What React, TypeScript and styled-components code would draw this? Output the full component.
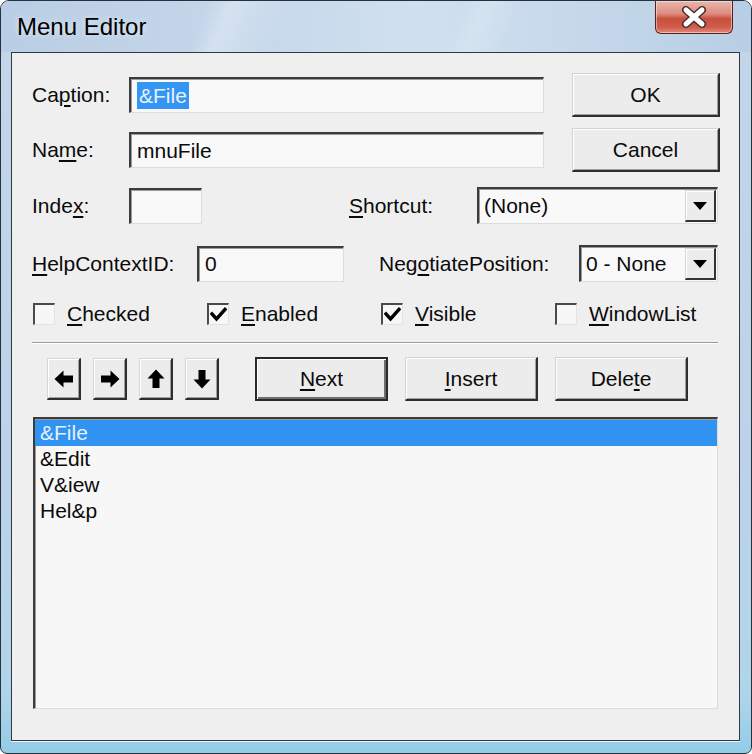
import React from "react";
import styled, { createGlobalStyle } from "styled-components";

const Global = createGlobalStyle`
  html, body { margin: 0; padding: 0; background: #ffffff; }
  body {
    width: 752px; height: 754px; overflow: hidden;
    font-family: "Liberation Sans", Arial, sans-serif;
    color: #0a0a0a;
  }
  * { box-sizing: border-box; }
`;

const Window = styled.div`
  width: 752px;
  height: 754px;
  border: 1px solid #27313c;
  border-radius: 9px 9px 7px 7px;
  background: linear-gradient(180deg, #c3d6ea 0%, #bdd2e8 60%, #b0d5ea 92%, #92cce6 100%);
  display: flex;
  flex-direction: column;
  overflow: hidden;
`;

const TitleBar = styled.div`
  height: 51px;
  flex: none;
  display: flex;
  align-items: flex-start;
  justify-content: space-between;
  padding: 0 18px 0 16px;
  background:
    linear-gradient(112deg, transparent 0 27%, rgba(255,255,255,0.28) 30%, rgba(255,255,255,0.12) 34%, transparent 38%),
    linear-gradient(112deg, transparent 0 60%, rgba(255,255,255,0.18) 63%, transparent 68%),
    linear-gradient(90deg, #b9cde4 0%, #c6d8eb 35%, #d0e0ef 55%, #c4d7ea 80%, #b8cee5 100%);
`;

const Title = styled.div`
  margin-top: 12px;
  font-size: 24px;
  line-height: 28px;
  color: #000;
  text-shadow: 0 0 6px rgba(255,255,255,0.7);
`;

const CloseButton = styled.div`
  width: 78px;
  height: 33px;
  border: 1px solid #5a2018;
  border-top: none;
  border-radius: 0 0 6px 6px;
  background: linear-gradient(180deg, #eab7ad 0%, #dd8c7e 40%, #c9503f 55%, #d0594a 80%, #e08a78 100%);
  box-shadow: inset 0 0 0 1px rgba(255,255,255,0.45);
  display: flex;
  align-items: center;
  justify-content: center;
`;

const Client = styled.div`
  flex: 1;
  margin: 0 11px 12px 10px;
  border: 1px solid #2e3944;
  box-shadow: 0 1px 0 #eef5fa;
  background: #efefef;
  display: flex;
  flex-direction: column;
  padding: 20px 19px 31px 20px;
`;

const Row = styled.div<{ $h: number; $mt: number }>`
  display: flex;
  align-items: center;
  flex: none;
  height: ${(p) => p.$h}px;
  margin-top: ${(p) => p.$mt}px;
`;

const Label = styled.span<{ $w: number; $ml?: number }>`
  width: ${(p) => p.$w}px;
  margin-left: ${(p) => p.$ml ?? 0}px;
  flex: none;
  font-size: 21px;
  white-space: nowrap;
`;

const Key = styled.span`
  text-decoration: underline;
  text-underline-offset: 3px;
  text-decoration-thickness: 2px;
`;

const TextBox = styled.div<{ $w: number }>`
  width: ${(p) => p.$w}px;
  height: 36px;
  flex: none;
  border-style: solid;
  border-width: 2px 1px 1px 2px;
  border-color: #3c3c3c #dcdcdc #dcdcdc #3c3c3c;
  box-shadow: inset 1px 1px 0 #9a9a9a;
  background: #f9f9f9;
  display: flex;
  align-items: center;
  padding-left: 6px;
  font-size: 21px;
`;

const Selected = styled.span`
  background: #3495f2;
  color: #e8f3ff;
  padding: 2px 2px;
  line-height: 23px;
`;

const Button = styled.div<{ $w: number; $default?: boolean }>`
  width: ${(p) => p.$w}px;
  height: 44px;
  flex: none;
  font-size: 21px;
  display: flex;
  align-items: center;
  justify-content: center;
  background: #ececec;
  border-style: solid;
  border-width: ${(p) => (p.$default ? "2px" : "1px 2px 2px 1px")};
  border-color: ${(p) =>
    p.$default ? "#2a2a2a" : "#d2d2d2 #2e2e2e #2e2e2e #d2d2d2"};
  box-shadow: ${(p) =>
    p.$default
      ? "inset 1px 1px 0 #ffffff, inset -2px -2px 0 #6e6e6e"
      : "inset 1px 1px 0 #ffffff, inset -1px -1px 0 #a0a0a0"};
`;

const ArrowButton = styled.div`
  width: 34px;
  height: 42px;
  flex: none;
  display: flex;
  align-items: center;
  justify-content: center;
  background: #ececec;
  border-style: solid;
  border-width: 1px 2px 2px 1px;
  border-color: #d6d6d6 #2e2e2e #2e2e2e #d6d6d6;
  box-shadow: inset 1px 1px 0 #ffffff, inset -1px -1px 0 #a0a0a0;
`;

const Spacer = styled.div<{ $w: number }>`
  width: ${(p) => p.$w}px;
  flex: none;
`;

const Combo = styled.div<{ $w: number }>`
  width: ${(p) => p.$w}px;
  height: 37px;
  flex: none;
  border-style: solid;
  border-width: 2px 1px 1px 2px;
  border-color: #3c3c3c #dcdcdc #dcdcdc #3c3c3c;
  box-shadow: inset 1px 1px 0 #9a9a9a;
  background: #f9f9f9;
  display: flex;
  align-items: stretch;
  font-size: 21px;
`;

const ComboText = styled.div`
  flex: 1;
  display: flex;
  align-items: center;
  padding-left: 5px;
  white-space: nowrap;
  overflow: hidden;
`;

const DropButton = styled.div`
  width: 31px;
  flex: none;
  margin: 1px 1px 1px 0;
  display: flex;
  align-items: center;
  justify-content: center;
  background: #ececec;
  border-style: solid;
  border-width: 1px 2px 2px 1px;
  border-color: #d8d8d8 #333333 #333333 #d8d8d8;
  box-shadow: inset 1px 1px 0 #ffffff;
`;

const CheckCell = styled.div<{ $first?: boolean }>`
  width: 174px;
  flex: none;
  display: flex;
  align-items: center;
  gap: 12px;
  margin-left: ${(p) => (p.$first ? "1px" : "0")};
  font-size: 21px;
`;

const CheckBox = styled.div`
  width: 22px;
  height: 22px;
  flex: none;
  border-style: solid;
  border-width: 2px 1px 1px 2px;
  border-color: #4a4a4a #e2e2e2 #e2e2e2 #4a4a4a;
  background: #f7f7f7;
  display: flex;
  align-items: center;
  justify-content: center;
`;

const Separator = styled.div`
  flex: none;
  margin-top: 15px;
  margin-right: 2px;
  height: 2px;
  border-top: 1px solid #9c9c9c;
  border-bottom: 1px solid #ffffff;
`;

const ArrowGroup = styled.div`
  display: flex;
  gap: 12px;
  margin-left: 15px;
`;

const ActionGroup = styled.div`
  display: flex;
  gap: 17px;
  margin-left: 36px;
`;

const List = styled.div`
  flex: 1;
  margin: 16px 2px 0 1px;
  border-style: solid;
  border-width: 2px 1px 1px 2px;
  border-color: #3c3c3c #dcdcdc #dcdcdc #3c3c3c;
  box-shadow: inset 1px 1px 0 #9a9a9a;
  background: #f7f7f7;
  padding-top: 1px;
  display: flex;
  flex-direction: column;
`;

const ListItem = styled.div<{ $selected?: boolean }>`
  height: 26px;
  line-height: 26px;
  padding-left: 5px;
  font-size: 21px;
  background: ${(p) => (p.$selected ? "#3193f1" : "transparent")};
  color: ${(p) => (p.$selected ? "#e3f1ff" : "#0a0a0a")};
`;

const CloseGlyph = () => (
  <svg width="28" height="22" viewBox="0 0 28 22">
    <path d="M6 4 L22 18 M22 4 L6 18" stroke="#4a3030" strokeWidth="8" strokeLinecap="round" fill="none" />
    <path d="M6 4 L22 18 M22 4 L6 18" stroke="#ffffff" strokeWidth="5" strokeLinecap="round" fill="none" />
  </svg>
);

const DownTri = () => (
  <svg width="14" height="8" viewBox="0 0 14 8">
    <path d="M0 0 L14 0 L7 8 Z" fill="#000" />
  </svg>
);

const Check = () => (
  <svg width="17" height="15" viewBox="0 0 17 15">
    <path d="M2 7 L6.5 12 L15 2.5" stroke="#000" strokeWidth="3.4" fill="none" strokeLinecap="square" />
  </svg>
);

const Arrow = ({ rot }: { rot: number }) => (
  <svg width="20" height="20" viewBox="0 0 20 20" style={{ transform: `rotate(${rot}deg)` }}>
    <path d="M0.5 10 L9.5 1.5 L9.5 6.5 L19 6.5 L19 13.5 L9.5 13.5 L9.5 18.5 Z" fill="#000" />
  </svg>
);

export default function App() {
  return (
    <>
      <Global />
      <Window>
        <TitleBar>
          <Title>Menu Editor</Title>
          <CloseButton>
            <CloseGlyph />
          </CloseButton>
        </TitleBar>
        <Client>
          <Row $h={44} $mt={0}>
            <Label $w={97}>
              Ca<Key>p</Key>tion:
            </Label>
            <TextBox $w={415}>
              <Selected>&amp;File</Selected>
            </TextBox>
            <Spacer $w={28} />
            <Button $w={148}>OK</Button>
          </Row>
          <Row $h={44} $mt={11}>
            <Label $w={97}>
              Na<Key>m</Key>e:
            </Label>
            <TextBox $w={415}>mnuFile</TextBox>
            <Spacer $w={28} />
            <Button $w={148}>Cancel</Button>
          </Row>
          <Row $h={37} $mt={15}>
            <Label $w={97}>
              Inde<Key>x</Key>:
            </Label>
            <TextBox $w={73} />
            <Label $w={128} $ml={147}>
              <Key>S</Key>hortcut:
            </Label>
            <Combo $w={241}>
              <ComboText>(None)</ComboText>
              <DropButton>
                <DownTri />
              </DropButton>
            </Combo>
          </Row>
          <Row $h={37} $mt={21}>
            <Label $w={165}>
              <Key>H</Key>elpContextID:
            </Label>
            <TextBox $w={147}>0</TextBox>
            <Label $w={200} $ml={35}>
              Neg<Key>o</Key>tiatePosition:
            </Label>
            <Combo $w={139}>
              <ComboText>0 - None</ComboText>
              <DropButton>
                <DownTri />
              </DropButton>
            </Combo>
          </Row>
          <Row $h={26} $mt={19}>
            <CheckCell $first>
              <CheckBox />
              <span>
                <Key>C</Key>hecked
              </span>
            </CheckCell>
            <CheckCell>
              <CheckBox>
                <Check />
              </CheckBox>
              <span>
                <Key>E</Key>nabled
              </span>
            </CheckCell>
            <CheckCell>
              <CheckBox>
                <Check />
              </CheckBox>
              <span>
                <Key>V</Key>isible
              </span>
            </CheckCell>
            <CheckCell>
              <CheckBox />
              <span>
                <Key>W</Key>indowList
              </span>
            </CheckCell>
          </Row>
          <Separator />
          <Row $h={44} $mt={13}>
            <ArrowGroup>
              <ArrowButton>
                <Arrow rot={0} />
              </ArrowButton>
              <ArrowButton>
                <Arrow rot={180} />
              </ArrowButton>
              <ArrowButton>
                <Arrow rot={90} />
              </ArrowButton>
              <ArrowButton>
                <Arrow rot={270} />
              </ArrowButton>
            </ArrowGroup>
            <ActionGroup>
              <Button $w={133} $default>
                <span>
                  <Key>N</Key>ext
                </span>
              </Button>
              <Button $w={133}>
                <span>
                  <Key>I</Key>nsert
                </span>
              </Button>
              <Button $w={133}>
                <span>
                  Dele<Key>t</Key>e
                </span>
              </Button>
            </ActionGroup>
          </Row>
          <List>
            <ListItem $selected>&amp;File</ListItem>
            <ListItem>&amp;Edit</ListItem>
            <ListItem>V&amp;iew</ListItem>
            <ListItem>Hel&amp;p</ListItem>
          </List>
        </Client>
      </Window>
    </>
  );
}
